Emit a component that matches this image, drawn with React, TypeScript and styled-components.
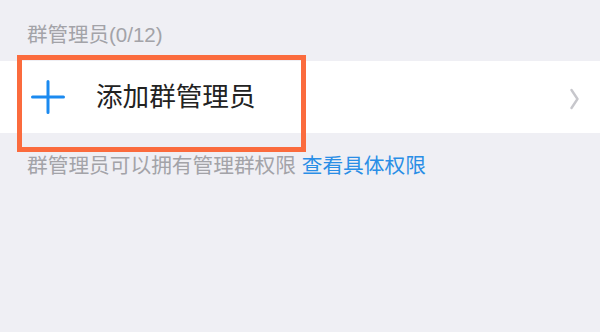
import React from "react";
import styled, { createGlobalStyle } from "styled-components";

const Global = createGlobalStyle`
  html, body { margin: 0; padding: 0; background: #efeff4; }
  body { font-family: "Liberation Sans", "Noto Sans CJK SC", sans-serif; }
`;

const Page = styled.div`
  position: relative;
  width: 600px;
  height: 332px;
  background: #efeff4;
  overflow: hidden;
`;

const SectionHeader = styled.div`
  box-sizing: border-box;
  height: 61px;
  padding: 22px 0 0 27px;
  font-size: 20.5px;
  line-height: 26px;
  color: #a3a3a8;
`;

const Row = styled.div`
  box-sizing: border-box;
  height: 72px;
  background: #ffffff;
  display: flex;
  align-items: center;
  padding: 0 21px 0 31px;
`;

const PlusIcon = styled.svg`
  width: 34px;
  height: 34px;
  flex: none;
`;

const RowLabel = styled.span`
  margin-left: 31px;
  flex: 1;
  font-size: 26.6px;
  line-height: 32px;
  color: #222222;
`;

const Chevron = styled.svg`
  width: 9px;
  height: 22px;
  flex: none;
  margin-top: 4px;
`;

const Footer = styled.div`
  padding: 20px 0 0 27px;
  font-size: 20.7px;
  line-height: 26px;
  color: #a3a3a8;
`;

const Link = styled.span`
  color: #2a8ee6;
`;

const Highlight = styled.div`
  position: absolute;
  left: 17px;
  top: 55px;
  width: 289px;
  height: 97px;
  box-sizing: border-box;
  border: 5px solid #fb6b3d;
  pointer-events: none;
`;

export default function App() {
  return (
    <Page>
      <Global />
      <SectionHeader>群管理员(0/12)</SectionHeader>
      <Row>
        <PlusIcon viewBox="0 0 34 34">
          <path d="M17 1.5V32.5M1.5 17H32.5" stroke="#1b8af0" strokeWidth="3" strokeLinecap="round" />
        </PlusIcon>
        <RowLabel>添加群管理员</RowLabel>
        <Chevron viewBox="0 0 9 22">
          <path d="M1.5 2L7.5 11L1.5 20" fill="none" stroke="#c7c7cc" strokeWidth="2.4" strokeLinecap="round" strokeLinejoin="round" />
        </Chevron>
      </Row>
      <Footer>
        群管理员可以拥有管理群权限 <Link>查看具体权限</Link>
      </Footer>
      <Highlight />
    </Page>
  );
}
